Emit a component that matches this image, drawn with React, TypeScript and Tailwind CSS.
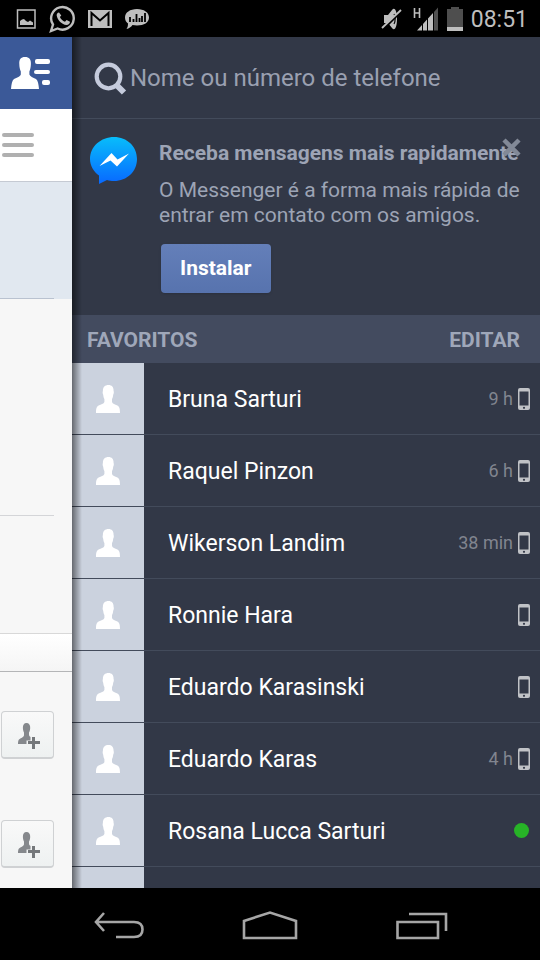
import React from "react";

const contacts = [
  { name: "Bruna Sarturi", seen: "9 h", status: "mobile" },
  { name: "Raquel Pinzon", seen: "6 h", status: "mobile" },
  { name: "Wikerson Landim", seen: "38 min", status: "mobile" },
  { name: "Ronnie Hara", seen: "", status: "mobile" },
  { name: "Eduardo Karasinski", seen: "", status: "mobile" },
  { name: "Eduardo Karas", seen: "4 h", status: "mobile" },
  { name: "Rosana Lucca Sarturi", seen: "", status: "online" },
  { name: "", seen: "", status: "" },
];

const personPath =
  "M12.500 0C9 0 6.800 2 6.900 6C6.500 6.600 6.600 8.800 7.200 9.800C7.400 11.800 7.800 13 8.400 14V17C7.800 18.800 5 19.300 2.600 20.500C.6 21.600 0 23.500 0 28H24C24 23.500 23.400 21.600 21.400 20.500C19 19.300 16.600 18.800 16 17V14C16.600 13 17 11.800 17.200 9.800C17.900 8.800 18 6.600 17.600 6C17.700 2 15.800 0 12.500 0Z";

function StatusBar() {
  return (
    <header className="flex h-[37px] shrink-0 items-center justify-between bg-black pl-4 pr-3 text-[#bebebe]">
      <div className="flex items-center gap-3">
        <svg width="20" height="20" viewBox="0 0 20 20" fill="none">
          <rect x="1.500" y="1" width="17.500" height="18" stroke="currentColor" strokeWidth="1.500" />
          <path d="M4 16V12L6 10.500L8 10L10 12L12 13L14 11.500L17 13.500V16Z" fill="currentColor" />
        </svg>
        <svg width="28" height="28" viewBox="0 0 28 28" fill="none">
          <path
            d="M3 26L5 19.500A11.300 11.300 0 1 1 9.600 23.500Z"
            stroke="currentColor"
            strokeWidth="2.400"
          />
          <path
            d="M11 7.500C9.500 7.500 8.500 9 8.700 10.500C9.500 15.500 14 19.500 18.500 20C20.500 20 22 18.500 22 16.700L18.600 15L17 16.800C14.500 16 12.800 14.200 11.900 12.100L13.300 10.500Z"
            fill="currentColor"
          />
        </svg>
        <svg width="24" height="18" viewBox="0 0 24 18">
          <rect width="24" height="18" fill="currentColor" />
          <path d="M3.500 16V3L12 10.500L20.500 3V16" fill="none" stroke="#000" strokeWidth="2" />
        </svg>
        <svg width="26" height="22" viewBox="0 0 26 22">
          <path
            d="M13 1C20 1 25 4.500 25 9.500C25 14.500 20 17.500 13 17.500C11.500 17.500 10 17.300 8.500 17C7 19 5 20.500 2.500 21C3.500 19.500 4 18 4 15.500C2 14 1 12 1 9.500C1 4.500 6 1 13 1Z"
            fill="currentColor"
          />
          <path
            d="M6 14V9M9.500 14V11M12.500 14V6M15.500 14V10M18 14V8M21 14V5"
            stroke="#000"
            strokeWidth="1.800"
          />
        </svg>
      </div>
      <div className="flex items-center">
        <svg width="22" height="26" viewBox="0 0 22 26">
          <path d="M3 9H7L11 4C14 0 16 6 16 13S14 26 11 22L7 17H3Z" fill="currentColor" />
          <path d="M13 8C14.500 10 14.500 16 13 18" fill="none" stroke="#000" strokeWidth="1.200" />
          <path d="M1 24L20 5" stroke="#000" strokeWidth="3" />
          <path d="M1 22L20 4" stroke="currentColor" strokeWidth="1.800" />
        </svg>
        <svg className="ml-2.5" width="26" height="26" viewBox="0 0 26 26">
          <path
            d="M1.500 2V12M6.500 2V12M1.500 7H6.500"
            stroke="currentColor"
            strokeWidth="1.600"
            fill="none"
          />
          <path
            d="M4 24.500L9 19V24.500ZM10 18L14 13.500V24.500H10ZM15 12.500L20 7V24.500H15Z"
            fill="currentColor"
          />
          <path d="M21 6L25 1.500V24.500H21Z" fill="#505050" />
        </svg>
        <svg className="ml-2" width="16" height="24" viewBox="0 0 16 24">
          <path d="M4 0H12V2H16V21H0V2H4Z" fill="#4e4e4e" />
          <path d="M0 20H16V24H0Z" fill="currentColor" />
        </svg>
        <span className="ml-2 pt-0.5 text-[23px] leading-8">08:51</span>
      </div>
    </header>
  );
}

function AddFriendButton() {
  return (
    <button
      type="button"
      aria-label="Adicionar amigo"
      className="flex h-12 w-[53px] items-center justify-center rounded border border-b-2 border-[#cfd1d3] bg-linear-to-b from-[#f9f9f9] to-[#eef1f1] pl-0.5 pt-0.5"
    >
      <svg width="22" height="26" viewBox="0 0 22 26" fill="#85888c">
        <path d="M8.500 0C6 0 4.700 2 4.900 5C5 7 5.500 8.500 6 9.500V12.500C5.500 14.500 2.500 15 1 16.500C.2 17.500 0 19 0 21H8.500V17.500H12.500V14C11.500 13.500 11 12.500 11 11.500V9.500C11.700 8.500 12 7 12.200 5C12.400 2 11 0 8.500 0Z" />
        <path d="M14 14H17V18H22V21H17V26H14V21H10V18H14Z" fill="#75787b" />
      </svg>
    </button>
  );
}

function Feed() {
  return (
    <section className="w-[72px] shrink-0 bg-[#f7f7f7]">
      <button
        type="button"
        aria-label="Amigos"
        className="flex h-[72px] w-full items-center bg-[#3b5998] pl-[11px]"
      >
        <svg width="40" height="33" viewBox="0 0 40 33" fill="#fff">
          <path d="M14 0C9.800 0 8 2.500 8.300 7C8.300 10 9 12.500 9.800 14.500V17.500C9.300 19.500 6 20.500 3 22C1 23.500 .5 27 0 32H28C27.500 27 27 23.500 25 22C22 20.500 18.900 19.500 18.400 17.500V14.500C19.200 12.500 19.800 10 19.900 7C20.200 2.500 18.200 0 14 0Z" />
          <rect x="24" y="2" width="15" height="5" rx="2" />
          <rect x="23" y="13" width="16" height="4" rx="2" />
          <rect x="31" y="23" width="8" height="5" rx="2" />
        </svg>
      </button>
      <div className="flex h-[73px] items-center border-b border-[#c5cad3] bg-white pl-0.5">
        <button type="button" aria-label="Menu" className="flex flex-col gap-1.5">
          <span className="h-1 w-8 rounded-sm bg-[#b0b0b0]"></span>
          <span className="h-1 w-8 rounded-sm bg-[#b0b0b0]"></span>
          <span className="h-1 w-8 rounded-sm bg-[#b0b0b0]"></span>
        </button>
      </div>
      <div className="h-[117px] bg-[#e1e8f0] pr-[18px]">
        <div className="h-full border-b border-[#b9c2d0]"></div>
      </div>
      <div className="mr-[18px] h-[217px] border-b border-[#d4d5d8]"></div>
      <div className="h-[117px]"></div>
      <div className="h-[39px] border-b border-t border-b-[#b4b5b7] border-t-[#d8d8d8] bg-linear-to-b from-white to-[#f5f5f5]"></div>
      <div className="flex flex-col gap-[61px] pl-px pt-[39px]">
        <AddFriendButton />
        <AddFriendButton />
      </div>
    </section>
  );
}

function Search() {
  return (
    <div className="flex h-[82px] shrink-0 items-center gap-[3px] border-b border-[#434b5b] px-[22px]">
      <label htmlFor="search" aria-label="Pesquisar">
        <svg width="33" height="34" viewBox="0 0 33 34" fill="none" stroke="#c5cbdc">
          <circle cx="14.500" cy="15.500" r="11.800" strokeWidth="4.200" />
          <path d="M22.500 24L30 31.500" strokeWidth="6" />
        </svg>
      </label>
      <input
        id="search"
        type="text"
        placeholder="Nome ou número de telefone"
        className="min-w-0 flex-1 text-2xl text-white placeholder-[#9aa0b1] focus:outline-none"
      />
    </div>
  );
}

function MessengerPromo() {
  return (
    <div className="relative flex h-[196px] shrink-0 gap-[21px] pl-[18px] pt-[18px] text-[#9da4b5]">
      <svg className="shrink-0" width="48" height="48" viewBox="0 0 48 48">
        <defs>
          <linearGradient id="bubble" x1="0" y1="0" x2="0" y2="1">
            <stop offset="0" stopColor="#08bdfb" />
            <stop offset="1" stopColor="#0868ff" />
          </linearGradient>
        </defs>
        <path
          d="M24 0C37 0 47 9.500 47 22S37 44 24 44C21.500 44 19 43.700 17 43L9 47V38.500C3.500 34.500 0 28.500 0 22C0 9.500 11 0 24 0Z"
          fill="url(#bubble)"
        />
        <path d="M9.500 29L21.500 16L27.500 22.500L39 16.500L27 29.500L20.500 23.500Z" fill="#fff" />
      </svg>
      <div className="flex flex-col items-start">
        <h2 className="whitespace-nowrap pt-0.5 text-[21px] leading-7 font-bold">
          Receba mensagens mais rapidamente
        </h2>
        <p className="mt-[11px] text-[21px] leading-[25px]">
          O Messenger é a forma mais rápida de
          <br />
          entrar em contato com os amigos.
        </p>
        <button
          type="button"
          className="ml-0.5 mt-4 h-[49px] rounded bg-linear-to-b from-[#647fb9] to-[#5773ae] px-[19px] text-[21px] font-bold text-white shadow"
        >
          Instalar
        </button>
      </div>
      <button type="button" aria-label="Fechar" className="absolute right-[18px] top-[18px]">
        <svg width="21" height="21" viewBox="0 0 21 21">
          <path d="M3 3L18 18M18 3L3 18" stroke="#828997" strokeWidth="4.500" />
        </svg>
      </button>
    </div>
  );
}

function PhoneIcon() {
  return (
    <svg width="12" height="22" viewBox="0 0 12 22">
      <rect width="12" height="22" rx="2" fill="#c0c2c6" />
      <rect x="1.500" y="3.500" width="9" height="14" fill="#323847" />
      <circle cx="6" cy="19.800" r="1.100" fill="#323847" />
    </svg>
  );
}

function Favorites() {
  return (
    <>
      <div className="flex h-12 shrink-0 items-center justify-between bg-[#434b5f] pl-[15px] pr-5 pt-0.5 text-[21px] leading-8 font-bold text-[#9fa7b9]">
        <h2>FAVORITOS</h2>
        <button type="button">EDITAR</button>
      </div>
      <ul>
        {contacts.map((contact, i) => (
          <li key={i} className="flex h-[72px] items-center border-b border-[#434b5b]">
            <div className="flex h-full w-[72px] shrink-0 items-center justify-center bg-[#cbd2de]">
              <svg width="24" height="28" viewBox="0 0 24 28" fill="#fff">
                <path d={personPath} />
              </svg>
            </div>
            <span className="flex-1 pl-6 pt-0.5 text-[23px] leading-8 text-white">{contact.name}</span>
            {contact.status === "mobile" && (
              <span className="flex items-center gap-[5px] pr-2.5 text-lg text-[#81858f]">
                {contact.seen}
                <PhoneIcon />
              </span>
            )}
            {contact.status === "online" && (
              <span className="mr-[11px] h-[15px] w-[15px] rounded-full bg-[#27b327]"></span>
            )}
          </li>
        ))}
      </ul>
    </>
  );
}

function NavBar() {
  return (
    <nav className="flex h-[72px] shrink-0 items-center justify-between bg-black pl-[94px] pr-[92px] pt-1 text-[#a6a6a6]">
      <button type="button" aria-label="Voltar">
        <svg width="50" height="30" viewBox="0 0 50 30" fill="none" stroke="currentColor" strokeWidth="2.600">
          <path d="M10 2L2 11L10 20M2 11H40C46 11 48.500 14 48.500 18.500S46 26 40 26H22" />
        </svg>
      </button>
      <button type="button" aria-label="Início">
        <svg width="56" height="30" viewBox="0 0 56 30" fill="none" stroke="currentColor" strokeWidth="2.600">
          <path d="M2 27V10L28 1.500L54 10V27Z" />
        </svg>
      </button>
      <button type="button" aria-label="Recentes">
        <svg width="52" height="28" viewBox="0 0 52 28" fill="none" stroke="currentColor" strokeWidth="2.600">
          <path d="M1.500 10H42V26H1.500ZM13 2H50V19" />
        </svg>
      </button>
    </nav>
  );
}

export default function App() {
  return (
    <div className="flex h-screen flex-col font-[Roboto,sans-serif]">
      <StatusBar />
      <main className="flex min-h-0 flex-1 overflow-hidden">
        <Feed />
        <section className="relative flex min-w-0 flex-1 flex-col bg-[#323847]">
          <Search />
          <MessengerPromo />
          <Favorites />
          <div className="pointer-events-none absolute inset-y-0 left-0 w-2.5 bg-linear-to-r from-black/50 to-transparent"></div>
        </section>
      </main>
      <NavBar />
    </div>
  );
}
